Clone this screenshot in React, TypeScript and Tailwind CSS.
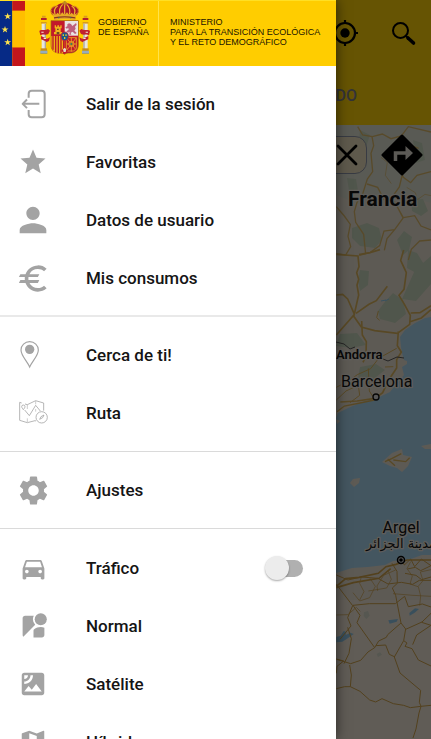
import { useState, type ReactNode } from "react";
import {
  MdDirectionsCar,
  MdEuro,
  MdMap,
  MdPerson,
  MdSatellite,
  MdSettings,
  MdStar,
  MdStreetview,
} from "react-icons/md";

function ExitIcon() {
  return (
    <svg className="h-[30px] w-7 shrink-0" viewBox="57 28 84 90" fill="none" stroke="currentColor" strokeWidth="6" strokeLinecap="butt" strokeLinejoin="round">
      <path d="M86 54V42q0-9 9-9h30q9 0 9 9v62q0 9-9 9H95q-9 0-9-9V91" />
      <path d="M118 72.500H69M81 59.500l-13 13 13 13" />
    </svg>
  );
}

function PinIcon() {
  return (
    <svg className="h-[30px] w-7 shrink-0" viewBox="57 108 84 90" fill="none">
      <path d="M89 189C81 171 63 155 63 138a26 25 0 0 1 52 0c0 17-18 33-26 51z" stroke="currentColor" strokeWidth="3.500" />
      <circle cx="89" cy="136" r="14" fill="currentColor" />
    </svg>
  );
}

function RouteIcon() {
  return (
    <svg className="h-[30px] w-[30px] shrink-0" viewBox="54 282 90 90" fill="none" stroke="currentColor" strokeWidth="2.400" strokeLinejoin="round">
      <path d="M108 351l-3-1-23 6-23-7v-54l6 2m10 3l7 2 25-12 24 7v23" />
      <path d="M82 302v13m0 28v11M107 291v10m0 14v8" strokeWidth="1.600" />
      <path d="M70 317c-3-4-5-7-5-9a5 5 0 0 1 10 0c0 2-2 5-5 9zM74 318l14 17 19-31 14 17" />
      <circle cx="125" cy="340" r="17" />
      <path d="M119 346l4-8 9-5-4 8z" />
    </svg>
  );
}

interface MenuItem {
  label: string;
  icon: ReactNode;
}

const accountItems: MenuItem[] = [
  { label: "Salir de la sesión", icon: <ExitIcon /> },
  { label: "Favoritas", icon: <MdStar size={30} className="shrink-0" /> },
  { label: "Datos de usuario", icon: <MdPerson size={40} className="shrink-0" /> },
  { label: "Mis consumos", icon: <MdEuro size={35} className="shrink-0" /> },
];

const searchItems: MenuItem[] = [
  { label: "Cerca de ti!", icon: <PinIcon /> },
  { label: "Ruta", icon: <RouteIcon /> },
];

const settingsItems: MenuItem[] = [
  { label: "Ajustes", icon: <MdSettings size={35} className="shrink-0" /> },
];

const mapItems: MenuItem[] = [
  { label: "Normal", icon: <MdStreetview size={29} className="shrink-0" /> },
  { label: "Satélite", icon: <MdSatellite size={30} className="shrink-0" /> },
  { label: "Híbrido", icon: <MdMap size={30} className="shrink-0" /> },
];

function MenuRow({ item }: { item: MenuItem }) {
  return (
    <li>
      <button type="button" className="flex h-[58px] w-full items-center gap-[39px] pl-[19px] text-left">
        <span className="flex w-7 shrink-0 justify-center text-[#a3a3a3]">{item.icon}</span>
        <span>{item.label}</span>
      </button>
    </li>
  );
}

function TrafficRow() {
  const [traffic, setTraffic] = useState(false);
  return (
    <li className="flex h-[58px] items-center gap-[39px] pr-[33px] pl-[19px]">
      <span className="flex w-7 shrink-0 justify-center text-[#a3a3a3]">
        <MdDirectionsCar size={29} className="shrink-0" />
      </span>
      <label htmlFor="traffic" className="flex-1">Tráfico</label>
      <input
        id="traffic"
        type="checkbox"
        role="switch"
        checked={traffic}
        onChange={(e) => setTraffic(e.target.checked)}
        className="relative h-[17px] w-9 appearance-none rounded-full bg-[#b0b0b0] before:absolute before:-top-1 before:-left-0.5 before:size-6 before:rounded-full before:bg-[#ececec] before:shadow-[0_1px_2px_rgba(0,0,0,0.35)] checked:bg-[#e6c84d] checked:before:left-3.5"
      />
    </li>
  );
}

function Flag() {
  return (
    <svg className="h-full w-[25px] shrink-0" viewBox="0 0 75 198" preserveAspectRatio="none">
      <path fill="#062a86" d="M0 0h37v198H0z" />
      <path fill="#c4161c" d="M37 0h38v30H37zM37 141h38v57H37z" />
      <path fill="#ffbe00" d="M37 30h38v111H37z" />
      <g fill="#ffe34d">
        <path id="star" d="M23 36l2.500 7.500h8l-6.500 4.700 2.500 7.600-6.500-4.700-6.500 4.700 2.500-7.600-6.500-4.700h8z" />
        <use href="#star" x="-8" y="40" />
        <use href="#star" y="79" />
      </g>
    </svg>
  );
}

function Pillar() {
  return (
    <g>
      <path fill="#b3202a" d="M33 51h17v6H33z" />
      <path fill="#d89a1e" d="M36 44h11v6H36zM33 63h17v5H33z" />
      <path fill="#e9e6df" d="M35 68h13v79H35z" />
      <path fill="#aaa69c" d="M44 68h4v79h-4z" />
      <path fill="#c78b16" d="M32 142h19v7H32z" />
      <path fill="#6f8ba6" d="M31 149h21v9H31z" />
      <path fill="#e7edf0" d="M31 152h21v2H31z" />
      <path fill="#c01f2e" d="M28 90c6-7 14 1 26-6l6 5-5 10c-8 5-18-1-24 4zM33 105l19 9v9l-19-8zM46 116l14-7-3 11-8 4z" />
      <path fill="#f4e3da" d="M34 92h7v3h-7zM41 111h7v3h-7z" />
    </g>
  );
}

function Crest() {
  return (
    <svg className="h-[55px] w-[54px] shrink-0" viewBox="24 0 162 165">
      <Pillar />
      <g transform="translate(208 0) scale(-1 1)">
        <Pillar />
      </g>
      {/* Crown */}
      <path fill="#a9182c" d="M68 43c-12-13-4-27 11-28 8-7 16-9 25-9s17 2 25 9c15 1 23 15 11 28z" />
      <path d="M104 8v33M98 10c-9 8-11 19-8 31M110 10c9 8 11 19 8 31M83 15c-12 7-11 18-7 28M125 15c12 7 11 18 7 28" fill="none" stroke="#f0b429" strokeWidth="3.500" />
      <path d="M68 41c-11-13-3-25 12-26M140 41c11-13 3-25-12-26" fill="none" stroke="#d48e20" strokeWidth="4" strokeDasharray="4 2" />
      <path fill="#be8820" d="M101 0h6v4h4v4h-4v5h-6V8h-4V4h4z" />
      <path fill="#e7ac26" d="M68 36l8 6 7-7 7 7 7-8 7 8 7-8 7 8 7-7 7 7 8-6-4 17H72z" />
      <path fill="#8a3420" d="M72 49q32-7 64 0v4q-32-6-64 0z" />
      <path fill="#e2a52d" d="M72 53q32-7 64 0v4q-32-6-64 0z" />
      <path fill="#318160" d="M84 49h4v3h-4zM120 49h4v3h-4z" />
      {/* Shield */}
      <path fill="#c3182b" stroke="#9c6717" strokeWidth="2" d="M63 59h82v72c0 19-13 25-25 25-8 0-13 1-16 4-3-3-8-4-16-4-12 0-25-6-25-25z" />
      <path fill="#e9e4e3" d="M104 60h40v44h-40z" />
      <path fill="#f1b31b" d="M74 73h4v4h4v-4h5v4h4v-4h4v9h-3v11h4v7H72v-7h4V82h-2z" />
      <path fill="#6a4a24" d="M81 83h5v4h-5zM80 93h8v7h-8z" />
      <path fill="#bd5f7b" d="M112 70l5-3 6 2 4 6 7-5 4-4 2 5-5 6 2 6-4 6 7 7-5 3-7-7-6 3 2 6h-6l1-9-5 3-5-4 7-5-1-5-5 2-4-4 6-3z" />
      <path fill="#efb116" d="M64 105h39v52c-3-1-8-1-15-1-12 0-24-6-24-25z" />
      <path stroke="#bd1b29" strokeWidth="4" d="M69 105v41M77 105v49M85 105v52M93 105v52M101 105v53" />
      <g fill="none" stroke="#e7ab22" strokeWidth="2.500">
        <path d="M109 110h30v32l-8 8h-22zM109 110l28 35M139 110l-30 39M124 110v42M109 129h30" />
        <circle cx="124" cy="129" r="8" />
      </g>
      <circle cx="124" cy="129" r="3" fill="#24805d" />
      <path fill="#c3182b" d="M94 149l10-11 10 11-10 9z" />
      <path fill="#eadcc1" d="M99 145l5-5 5 5-2 8h-6z" />
      <ellipse cx="104" cy="106" rx="11" ry="13" fill="#17598a" stroke="#ce2434" strokeWidth="2.500" />
      <path fill="#e5c22c" d="M98 100h4v5h-4zM106 100h4v5h-4zM102 108h4v6h-4z" />
    </svg>
  );
}

function Brand() {
  return (
    <header className="flex h-[66px] shrink-0 items-start border-t border-[#ffdf24] bg-[#ffcd00] font-['Liberation_Sans',sans-serif] text-[9px] leading-[10px] whitespace-nowrap text-[#1a1500]">
      <Flag />
      <div className="flex items-start gap-1.5 pl-[13px]">
        <Crest />
        <p className="w-[60px] pt-4">
          GOBIERNO
          <br />
          DE ESPAÑA
        </p>
      </div>
      <p className="h-full border-l border-[#ffe34a] pt-4 pl-[11px]">
        MINISTERIO
        <br />
        PARA LA TRANSICIÓN ECOLÓGICA
        <br />
        Y EL RETO DEMOGRÁFICO
      </p>
    </header>
  );
}

function MapView() {
  return (
    <svg className="h-full w-full" viewBox="0 125 431 614" preserveAspectRatio="xMaxYMin slice" fontFamily="Roboto, sans-serif">
      <path fill="#e9e1d3" d="M0 125h431v614H0z" />
      <path fill="#dfe0d2" d="M336 125h95v78l-30-8-30 14-35-14z" />
      <path fill="#f4ead9" d="M0 600h431v139H0z" opacity="0.6" />
      {/* Sea */}
      <path
        fill="#aad7f0"
        d="M431 317l-6 1-10 5-10 7-5 7 1 10 1 6 2 7 3 1v3l-5 3 2 8-7 8-7 9-15 7-13 3-14 6-10 5-2 5v155l16-5 16-1 17-2 8-4 8-1 7 0 14-5h9z"
      />
      <path fill="#e9e1d3" d="M382 462l10-9 10-4 1 6 9 2-4 9-6 6-5-4-7-2zM350 483l3-4 7-1-1 5-5 4zM421 446l10-2v5l-6 0zM336 419l4 2-3 3z" />
      {/* Woodland */}
      <g fill="#c9d7bd">
        <path d="M352 228l15-5 12 5 3 12-7 8-15-2-8-8zM397 240l7-9 8 6-3 13-6 5zM347 178l9 1 2 12-8 6zM411 200l12-1 5 12-7 5-9-5zM360 270l9 1-1 14-8 6-2-10zM384 303l9-10 10 7 3 14-11 9-15-4-2-8zM415 270l16-14v28l-15 17-14-2z" />
        <path d="M408 250l9 3 8 13-9 7-9-5zM360 130l10 5-4 12-7-5zM413 140l9 3 3 17-9 3zM340 334l17-1 9 12-15 3-15-2zM360 367l16-3 9 6-14 11-13-3z" />
      </g>
      {/* Francia */}
      <g transform="translate(325 120) scale(.33333)" fill="none" stroke="#dcb96a" strokeWidth="4">
        <path d="M98 20l15 25 28 5 5 27-8 23 5 55-16 22-14 45-17 25-8 28 4 32 24 36 6 60M34 260l24 28 18 25-7 36 8 31-15 25-28-4M318 155l-42 11-19 22-22-16-13-37 4-38 28-22 27 10M142 50l30-8 26 14 31-8 21-28 68 16M231 168l-8 33-27 38 21 22 18 32-26 36-23 27-8 35M235 293l34-6 19 31 30 12M209 329l-32 4-13 44-28 20-33 9M235 295l-25-48-33-8-19-37-32-10M318 360l-34 3-25 25-9 32" />
        <path strokeWidth="2" d="M79 90l20 7 7 27-22 25M168 112l19 15-6 39 18 25M245 202l26 16 6 21 23-16 18 4" />
      </g>
      <g transform="translate(325 250) scale(.33333)" fill="none" stroke="#dcb55c" strokeWidth="5">
        <path d="M34 13l65 5 3 32-7 18 6 20-5 17 5 30-13 57-20-45-15-14-19 2M102 14l33-6 30-9M236 0l-9 31 17 37-7 50-15 18 15 25 19 35-2 27-37 27-68-8-40-11-24-34-51 58M93 190l39-27 22-11 33-43M257 189l28-1 33-21M110 213l2 42 12 20-1 40-9 22M220 244l-3 43 12 19-14 23 0 25-24 36-18 38-23 17-54 8-50 3M253 216l36-12 29-25" />
        <path strokeWidth="3" d="M34 412l37-19 26-19 40-18 24-31 54-30M75 458l29-22-4-30-37 17-29 27M130 355l3 68 17 27M160 183l-5 20 9 8M180 351l25-1" />
      </g>
      <path d="M336 342l8 2 6 5 5-2M383 359l5 2 9-4 7 1" fill="none" stroke="#595959" strokeWidth="1" />
      <path d="M385 301l4-2M381 301l5-1" stroke="#8dcbed" strokeWidth="1" />
      {/* Baleares */}
      <g transform="translate(325 400) scale(.33333)" fill="none" stroke="#dcb55c" strokeWidth="4">
        <path d="M180 185l20-9 29-15M188 177l22 20M205 180l37 5 12-12" />
        <path d="M36 35l22-17 47-9 43-9" />
      </g>
      {/* Argelia */}
      <g transform="translate(325 560) scale(.33333)">
        <path fill="#8fc6e6" d="M190 181l29-4-4 8-21 6zM253 159l17-14 12 2-13 11-15 9zM34 231l13-4 9-14 8 3-2 9 14-7 10 4-20 14-14 9-18 2z" />
        <path fill="#d6d9ca" d="M117 157l12-4 5 14-10 10-8-9zM155 282l10-5 6 7-12 7z" />
        <g fill="none" stroke="#cfa24a" strokeWidth="3">
          <path strokeWidth="5" d="M34 79l28-23 40-4 58-12 23-20 30-7 33-13h72M34 83l51-15 77-13 35-29" />
          <path d="M34 45l35 15 40-9 50 4 30 17 40-5 34 6 20-12h35M201 10l15 24 1 36-15 14 10 22 16 83 14 18-6 35-28 49 17 48 51 43 11 9-4 36 5 12-6 20-9 48-9 27M34 73l49 64-15 36 10 25-33 40M84 136l49-5h78l28-22 11 31 42-8 26 9M84 136l21 30-9 22 53 75-20 13-22 25-30 10-42-13M149 263l12-20 23-11 4-8 40-35M153 257l29-2 11 28 17 8M236 242l10 7-6 10 21 7 19 34 38 18M242 208l49-22 27-26M290 187l28 9M263 254l12-29 43-29M57 311l15-31 7-44-11-34M74 315l5 30-3 35-17 0-25 6M76 380l29 14 29 26 18 6 19-10 34 15 31 5 20 7 32-4 30-3M34 340l2-21 20-16-22-6" />
          <path strokeWidth="2" d="M84 98l20 25 30-10 17-34-16-24M109 50l-5 20 13 25-13 25M189 31l10 27-14 26-55 9M34 165l35-1 25-22 12 12M257 5l-11 21 16 22-7 24 24 8 15-18-8-26 32-7M280 80l7 28-3 29M204 101l60 5 54 3M212 30l-36 16-20 32 2 15" />
          <path strokeWidth="3" d="M231 0l7 15 19-18 12 23 20-23 29 20M247 27l24-5 16 10 31-15M240 40l33 6 17 13 28-8" />
        </g>
      </g>
      <g fill="#161616" stroke="#eee9df" strokeWidth="2.500" strokeLinejoin="round" paintOrder="stroke">
        <text x="348" y="206" fontSize="21" fontWeight="700">Francia</text>
        <text x="336" y="359" fontSize="13" fontWeight="600">Andorra</text>
        <text x="341" y="387" fontSize="16">Barcelona</text>
        <text x="401" y="533" fontSize="16" textAnchor="middle">Argel</text>
        <text x="401" y="548" fontSize="13" textAnchor="middle" fontFamily="'DejaVu Sans', sans-serif">مدينة الجزائر</text>
      </g>
      <circle cx="376" cy="397" r="3" fill="#ddd" stroke="#111" strokeWidth="1.300" />
      <circle cx="401" cy="560" r="3.500" fill="#ddd" stroke="#000" strokeWidth="1.500" />
      <circle cx="401" cy="560" r="1.800" fill="#000" />
    </svg>
  );
}

function MapPage() {
  return (
    <main className="flex h-full flex-col">
      <header className="flex h-[125px] shrink-0 flex-col bg-[#ffd208]">
        <div className="flex h-[66px] items-center justify-end gap-[30px] pr-3.5">
          <button type="button" aria-label="Mi ubicación">
            <svg className="size-7" viewBox="0 0 28 28" fill="none" stroke="#000" strokeWidth="2.200">
              <circle cx="14" cy="14" r="10" />
              <circle cx="14" cy="14" r="4.700" fill="#000" stroke="none" />
              <path d="M14 1v4M14 23v4M1 14h4M23 14h4" />
            </svg>
          </button>
          <button type="button" aria-label="Buscar">
            <svg className="size-7" viewBox="0 0 28 28" fill="none" stroke="#000">
              <circle cx="11.500" cy="11.500" r="7.500" strokeWidth="2" />
              <path d="M16.500 16.500l3 3" strokeWidth="2" />
              <path d="M19 19l5.500 5" strokeWidth="3.600" strokeLinecap="round" />
            </svg>
          </button>
        </div>
        <div className="flex flex-1 items-center justify-end pr-[74px] text-base font-medium text-[#80808c]">
          <a href="#listado">DO</a>
        </div>
      </header>
      <div className="relative min-h-0 flex-1">
        <MapView />
        <div className="absolute inset-x-0 top-0 flex items-center justify-end gap-3.5 pt-[9px] pr-2">
          <button type="button" aria-label="Borrar búsqueda" className="flex h-[38px] w-60 items-center justify-end rounded-xl border border-[#8d95a8] bg-[#ebdfbd] pr-2">
            <svg className="size-6" viewBox="0 0 24 24" fill="none" stroke="#000" strokeWidth="2.800" strokeLinecap="round">
              <path d="M4 3l18 18M22 3L4 21" />
            </svg>
          </button>
          <button type="button" aria-label="Cómo llegar">
            <svg className="size-[42px]" viewBox="0 0 42 42">
              <path d="M21 2l19 19-19 19L2 21z" fill="#000" stroke="#000" strokeWidth="3" strokeLinejoin="round" />
              <path d="M14.500 27v-8H28" fill="none" stroke="#e5e2d6" strokeWidth="3.500" />
              <path d="M24.500 12l7.500 7-7.500 7z" fill="#e5e2d6" />
            </svg>
          </button>
        </div>
      </div>
    </main>
  );
}

export default function App() {
  return (
    <div className="relative h-screen overflow-hidden bg-white font-[Roboto,sans-serif]">
      <MapPage />

      {/* Scrim and drawer */}
      <div className="absolute inset-0 bg-black/60" />
      <aside className="absolute inset-y-0 left-0 flex w-84 flex-col overflow-hidden bg-white shadow-[0_0_12px_rgba(0,0,0,0.6)]">
        <Brand />
        <nav className="min-h-0 flex-1 overflow-hidden text-[17px] leading-6 font-medium text-[#151515]">
          <ul className="border-b-2 border-[#e9e9e9] pt-[9px] pb-2">
            {accountItems.map((item) => <MenuRow key={item.label} item={item} />)}
          </ul>
          <ul className="border-b border-[#dadada] pt-[9px] pb-[9px]">
            {searchItems.map((item) => <MenuRow key={item.label} item={item} />)}
          </ul>
          <ul className="border-b border-[#dadada] pt-[9px] pb-[9px]">
            {settingsItems.map((item) => <MenuRow key={item.label} item={item} />)}
          </ul>
          <ul className="pt-2.5">
            <TrafficRow />
            {mapItems.map((item) => <MenuRow key={item.label} item={item} />)}
          </ul>
        </nav>
      </aside>
    </div>
  );
}
